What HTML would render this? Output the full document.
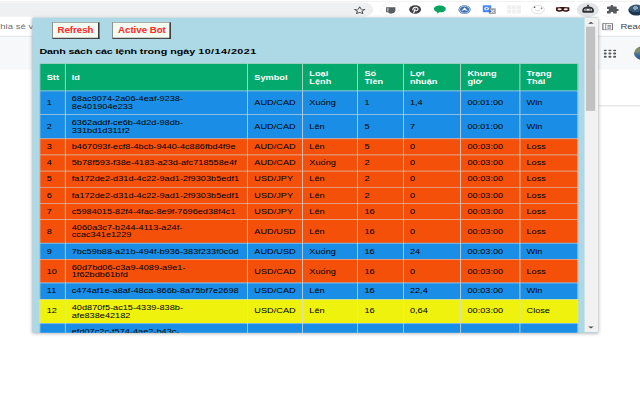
<!DOCTYPE html>
<html lang="vi">
<head>
<meta charset="utf-8">
<title>Danh sách các lệnh</title>
<style>
html,body{margin:0;padding:0;background:#fff;}
body{width:640px;height:400px;overflow:hidden;position:relative;font-family:"Liberation Sans",Arial,Helvetica,sans-serif;}
#stage{position:absolute;left:0;top:0;width:907px;height:794px;transform-origin:0 0;transform:scale(0.706,0.504);overflow:hidden;background:#fff;}
.abs{position:absolute;}
#topline{left:0;top:1.5px;width:907px;height:1px;background:#e6e6e8;}
#omni{left:-30px;top:5.0px;width:559.4px;height:27.5px;background:#eff0f2;border-radius:14px;}
#bookline{left:0;top:71.4px;width:907px;height:1.3px;background:#dfe0e3;}
#ghead{left:0;top:72.7px;width:907px;height:65.8px;background:#f7f8fa;}
#gline{left:847.7px;top:209.1px;width:70px;height:1.6px;background:#dcdcdc;}
#chia{left:-9.6px;top:43.8px;font-size:13.6px;color:#6f7276;white-space:nowrap;line-height:20px;}
#read{left:878.8px;top:44.4px;font-size:13.5px;color:#3c4043;white-space:nowrap;line-height:20px;}
#popup{left:46.0px;top:35.1px;width:801.4px;height:625.2px;background:#add8e6;box-shadow:0 1px 6px 1px rgba(0,0,0,0.35);overflow:hidden;}
.btn{position:absolute;top:8.9px;height:32.6px;box-sizing:border-box;border:1.6px solid #6a6a6a;border-right:2.4px solid #222;border-bottom:2.6px solid #222;background:#f4fbf0;color:#ff2626;font-weight:bold;font-size:16.6px;line-height:30.599999999999998px;text-align:center;white-space:nowrap;}
#b1{left:27.7px;width:67.8px;}
#b2{left:113.3px;width:82.9px;}
#title{left:9.8px;top:56.8px;font-size:15.2px;font-weight:bold;color:#000;white-space:nowrap;line-height:22px;}
#title .a{letter-spacing:-0.2px;}
#title .d{letter-spacing:0.68px;}
table{position:absolute;left:10.2px;top:91.4px;border-collapse:separate;border-spacing:0;table-layout:fixed;width:762.5px;font-size:13px;line-height:15.1px;color:#000;}
td,th{border:0 solid #ddd;border-top-width:1px;border-left-width:1px;padding:8px 4px 8px 9px;text-align:left;vertical-align:middle;white-space:nowrap;overflow:hidden;font-weight:normal;}
th{padding-top:11.25px;padding-bottom:11.25px;background:#04aa6d;color:#fff;font-weight:bold;}
td:last-child,th:last-child{border-right-width:1px;}
tr.w td{background:#1a8ee6;}
tr.l td{background:#f4500a;}
tr.c td{background:#eef20c;}
tr.last td{padding-top:13px;padding-bottom:3px;}
tr.last td:nth-child(2){padding-top:8px;padding-bottom:8px;}
#sb{left:781.5px;top:0;width:20px;height:624.2px;background:#f1f1f1;}
#thumb{left:784.3px;top:18.0px;width:13.2px;height:167.1px;background:#c1c1c1;}
.arr{position:absolute;left:787.3px;width:0;height:0;border-left:4px solid transparent;border-right:4px solid transparent;}
#au{top:7.5px;border-bottom:4px solid #505050;}
#ad{top:613.1px;border-top:4px solid #505050;}
.btn span{display:inline-block;transform:scaleX(0.825);transform-origin:50% 50%;position:relative;top:0.8px;}
.ico{position:absolute;}
</style>
</head>
<body>
<div id="stage">
  <div class="abs" id="topline"></div>
  <div class="abs" id="omni"></div>
  <div class="abs" id="bookline"></div>
  <div class="abs" id="ghead"></div>
  <div class="abs" id="gline"></div>
  <div class="abs" id="chia">Chia sẻ với</div>
  <div class="abs" id="read">Reading list</div>
  <svg class="ico" style="left:500.1px;top:10.6px" width="19" height="19" viewBox="0 0 20 20"><path d="M10 2.6 L12.2 7.6 L17.6 8.1 L13.5 11.7 L14.7 17 L10 14.2 L5.3 17 L6.5 11.7 L2.4 8.1 L7.8 7.6 Z" fill="none" stroke="#55585c" stroke-width="1.6" stroke-linejoin="round"/></svg>
  <div class="abs" style="left:538.7px;top:6.399999999999999px;width:26px;height:26px;border-radius:50%;background:#fff;border:1px solid #ececec;box-sizing:border-box"></div>
  <svg class="ico" style="left:543.0px;top:10.0px" width="22" height="22" viewBox="0 0 20 20"><path d="M3.5 4 H15.5 V10 C15.5 13.5 13 15.5 10 15.5 C8 15.5 6.5 14.5 6 13 H3.5 Z" fill="#5a5d61"/><rect x="5" y="5.5" width="1.6" height="6" fill="#c8c8c8"/></svg>
  <svg class="ico" style="left:576.5px;top:8.4px" width="22" height="22" viewBox="0 0 20 20"><circle cx="10" cy="10" r="7.6" fill="#3d3f43"/><path d="M8.2 16 L10 8.5 M7.4 11 C6.2 8.5 8 5.8 10.6 5.8 C13 5.8 14 7.6 13.6 9.6 C13.2 11.6 11.6 12.6 10.4 11.8" fill="none" stroke="#fff" stroke-width="1.5" stroke-linecap="round"/></svg>
  <svg class="ico" style="left:612.2px;top:8.4px" width="22" height="22" viewBox="0 0 20 20"><path d="M10 2.6 C14.4 2.6 17.6 5.2 17.6 8.8 C17.6 12.4 14.4 15 10 15 L9.4 15 L6.2 17.6 L6.6 14.3 C4 13.3 2.4 11.3 2.4 8.8 C2.4 5.2 5.6 2.6 10 2.6 Z" fill="#0ba360"/></svg>
  <svg class="ico" style="left:646.5px;top:8.4px" width="22" height="22" viewBox="0 0 20 20"><circle cx="10" cy="10" r="7.8" fill="#3f6fb0"/><circle cx="10" cy="10" r="6.4" fill="none" stroke="#dfe8f5" stroke-width="1.2"/><path d="M5.6 12.6 L10 6.4 L14.4 12.6 L10 10.6 Z" fill="#fff"/></svg>
  <svg class="ico" style="left:681.6px;top:8.4px" width="22" height="22" viewBox="0 0 20 20"><rect x="1.6" y="2" width="11" height="13" rx="1.2" fill="#4a8af4"/><rect x="9.4" y="7.6" width="9" height="10.4" rx="1" fill="#9aa0a6"/><path d="M10 8 L13 15 H9.4 Z" fill="#3367d6"/><circle cx="6.6" cy="8.2" r="2.3" fill="none" stroke="#fff" stroke-width="1.5"/><path d="M11.8 10.4 L16.6 16 M16.6 10.4 L11.8 16" stroke="#e8eaed" stroke-width="1.3"/></svg>
  <svg class="ico" style="left:716.6px;top:8.4px" width="22" height="22" viewBox="0 0 20 20"><rect x="1" y="2.4" width="18" height="14.6" fill="#f0f0f1"/><path d="M7 2.4 V17 M13 2.4 V17 M1 9.7 H19" stroke="#fbfbfb" stroke-width="1.4"/></svg>
  <svg class="ico" style="left:751.0px;top:8.4px" width="22" height="22" viewBox="0 0 20 20"><ellipse cx="10" cy="10" rx="8.4" ry="7.6" fill="#fdfdfd" stroke="#d9d9dc" stroke-width="1.2"/><circle cx="5.6" cy="5.8" r="1.2" fill="#555"/><circle cx="14.6" cy="7.4" r="1.1" fill="#666"/><path d="M6.4 10.6 C8 12.8 11.4 12.8 13 10.2" fill="none" stroke="#cfcfd2" stroke-width="1.2"/></svg>
  <svg class="ico" style="left:785.9px;top:8.4px" width="22" height="22" viewBox="0 0 20 20"><path d="M1.4 6.2 C5 4.8 15 4.8 18.6 6.2 L18.6 11.6 C16.6 14.2 12.6 14.6 10 12.4 C7.4 14.6 3.4 14.2 1.4 11.6 Z" fill="#3c1414"/><ellipse cx="6" cy="9.4" rx="2.7" ry="1.7" fill="#f4ecec"/><ellipse cx="14" cy="9.4" rx="2.7" ry="1.7" fill="#f4ecec"/></svg>
  <div class="abs" style="left:816.5px;top:5.199999999999999px;width:31px;height:28.4px;border-radius:50%;background:#e3e4e7"></div>
  <svg class="ico" style="left:821.9px;top:8.4px" width="22" height="22" viewBox="0 0 20 20"><path d="M10 2 V5" stroke="#2e3033" stroke-width="1.8"/><circle cx="10" cy="2.4" r="1.3" fill="#2e3033"/><path d="M2.6 11.4 C2.6 7.2 5.6 4.6 10 4.6 C14.4 4.6 17.4 7.2 17.4 11.4 V14 C17.4 15 16.8 15.6 15.8 15.6 H4.2 C3.2 15.6 2.6 15 2.6 14 Z" fill="#2e3033"/><rect x="5" y="8.6" width="10" height="3.6" rx="1.6" fill="#e9e9ec"/><circle cx="7.3" cy="10.4" r="1.2" fill="#2e3033"/><circle cx="12.7" cy="10.4" r="1.2" fill="#2e3033"/></svg>
  <div class="abs" style="left:847.0px;top:5.399999999999999px;width:34px;height:28px;border-radius:14px;border:1px solid #f0f0f2;box-sizing:border-box"></div>
  <svg class="ico" style="left:856.4px;top:8.4px" width="22" height="22" viewBox="0 0 20 20"><path d="M8 3.4 C8 1.4 11.4 1.4 11.4 3.4 V4.6 H15 C15.6 4.6 16 5 16 5.6 V8.8 H17 C19.2 8.8 19.2 12.4 17 12.4 H16 V16 C16 16.6 15.6 17 15 17 H11.6 V16 C11.6 13.8 8 13.8 8 16 V17 H4.4 C3.8 17 3.4 16.6 3.4 16 V12.6 H4.4 C6.6 12.6 6.6 9 4.4 9 H3.4 V5.6 C3.4 5 3.8 4.6 4.4 4.6 H8 Z" fill="#55585c"/></svg>
  <div class="abs" style="left:890.1px;top:8.7px;width:22px;height:22px;border-radius:50%;background:radial-gradient(circle at 45% 30%,#8fa6b8 0 18%,#3b5a78 19% 45%,#1f3550 46% 100%)"></div>
  <svg class="ico" style="left:853.0px;top:46.0px" width="15.4" height="14.4" viewBox="0 0 15.4 14.4"><rect x="0.8" y="0.8" width="13.8" height="12.8" fill="#fff" stroke="#55585c" stroke-width="1.6"/><path d="M5 1 V13.4 M7.4 4.4 H12.6 M7.4 7.2 H12.6 M7.4 10 H12.6" stroke="#6a6d71" stroke-width="1.3" fill="none"/></svg>
  <svg class="ico" style="left:854.5px;top:98.0px" width="18" height="17" viewBox="0 0 18 17"><rect x="0.0" y="0.0" width="4.4" height="3.8" rx="1.6" fill="#55585c"/><rect x="6.7" y="0.0" width="4.4" height="3.8" rx="1.6" fill="#55585c"/><rect x="13.4" y="0.0" width="4.4" height="3.8" rx="1.6" fill="#55585c"/><rect x="0.0" y="6.4" width="4.4" height="3.8" rx="1.6" fill="#55585c"/><rect x="6.7" y="6.4" width="4.4" height="3.8" rx="1.6" fill="#55585c"/><rect x="13.4" y="6.4" width="4.4" height="3.8" rx="1.6" fill="#55585c"/><rect x="0.0" y="12.8" width="4.4" height="3.8" rx="1.6" fill="#55585c"/><rect x="6.7" y="12.8" width="4.4" height="3.8" rx="1.6" fill="#55585c"/><rect x="13.4" y="12.8" width="4.4" height="3.8" rx="1.6" fill="#55585c"/></svg>
  <div class="abs" style="left:897.5px;top:91.3px;width:29px;height:29px;border-radius:50%;background:linear-gradient(180deg,#6f8a58 0%,#8b8f6a 35%,#3e6f9e 60%,#2b4f7c 100%)"></div>
  <div class="abs" id="popup">
    <div class="btn" id="b1"><span>Refresh</span></div>
    <div class="btn" id="b2"><span>Active Bot</span></div>
    <div class="abs" id="title"><span class="a">Danh sách các lệnh </span>trong ngày <span class="d">10/14/2021</span></div>
    <table>
      <colgroup><col style="width:35.4px"><col style="width:258.5px"><col style="width:77.9px"><col style="width:77.9px"><col style="width:64.4px"><col style="width:81.5px"><col style="width:83.6px"><col style="width:82.8px"></colgroup>
      <tr><th>Stt</th><th>Id</th><th>Symbol</th><th>Loại<br>Lệnh</th><th>Số<br>Tiền</th><th>Lợi<br>nhuận</th><th>Khung<br>giờ</th><th>Trạng<br>Thái</th></tr>
      <tr class="w"><td>1</td><td>68ac9074-2a06-4eaf-9238-<br>8e401904e233</td><td>AUD/CAD</td><td>Xuống</td><td>1</td><td>1,4</td><td>00:01:00</td><td>Win</td></tr>
      <tr class="w"><td>2</td><td>6362addf-ce6b-4d2d-98db-<br>331bd1d311f2</td><td>AUD/CAD</td><td>Lên</td><td>5</td><td>7</td><td>00:01:00</td><td>Win</td></tr>
      <tr class="l"><td>3</td><td>b467093f-ecf8-4bcb-9440-4c886fbd4f9e</td><td>AUD/CAD</td><td>Lên</td><td>5</td><td>0</td><td>00:03:00</td><td>Loss</td></tr>
      <tr class="l"><td>4</td><td>5b78f593-f38e-4183-a23d-afc718558e4f</td><td>AUD/CAD</td><td>Xuống</td><td>2</td><td>0</td><td>00:03:00</td><td>Loss</td></tr>
      <tr class="l"><td>5</td><td>fa172de2-d31d-4c22-9ad1-2f9303b5edf1</td><td>USD/JPY</td><td>Lên</td><td>2</td><td>0</td><td>00:03:00</td><td>Loss</td></tr>
      <tr class="l"><td>6</td><td>fa172de2-d31d-4c22-9ad1-2f9303b5edf1</td><td>USD/JPY</td><td>Lên</td><td>2</td><td>0</td><td>00:03:00</td><td>Loss</td></tr>
      <tr class="l"><td>7</td><td>c5984015-82f4-4fac-8e9f-7696ed38f4c1</td><td>USD/JPY</td><td>Lên</td><td>16</td><td>0</td><td>00:03:00</td><td>Loss</td></tr>
      <tr class="l"><td>8</td><td>4060a3c7-b244-4113-a24f-<br>ccac341e1229</td><td>AUD/USD</td><td>Lên</td><td>16</td><td>0</td><td>00:03:00</td><td>Loss</td></tr>
      <tr class="w"><td>9</td><td>7bc59b88-a21b-494f-b936-383f233f0c0d</td><td>AUD/USD</td><td>Xuống</td><td>16</td><td>24</td><td>00:03:00</td><td>Win</td></tr>
      <tr class="l"><td>10</td><td>60d7bd06-c3a9-4089-a9e1-<br>1f62bdb61bfd</td><td>USD/CAD</td><td>Xuống</td><td>16</td><td>0</td><td>00:03:00</td><td>Loss</td></tr>
      <tr class="w"><td>11</td><td>c474af1e-a8af-48ca-866b-8a75bf7e2698</td><td>USD/CAD</td><td>Lên</td><td>16</td><td>22,4</td><td>00:03:00</td><td>Win</td></tr>
      <tr class="c"><td>12</td><td>40d870f5-ac15-4339-838b-<br>afe838e42182</td><td>USD/CAD</td><td>Lên</td><td>16</td><td>0,64</td><td>00:03:00</td><td>Close</td></tr>
      <tr class="w last"><td>13</td><td>efd07c2c-f574-4ae2-b43c-<br>9d1e7a3b52c4</td><td>USD/CAD</td><td>Lên</td><td>16</td><td>22,4</td><td>00:03:00</td><td>Win</td></tr>
    </table>
    <div class="abs" id="sb"></div>
    <div class="abs" id="thumb"></div>
    <div class="arr" id="au"></div>
    <div class="arr" id="ad"></div>
  </div>
</div>
</body>
</html>
